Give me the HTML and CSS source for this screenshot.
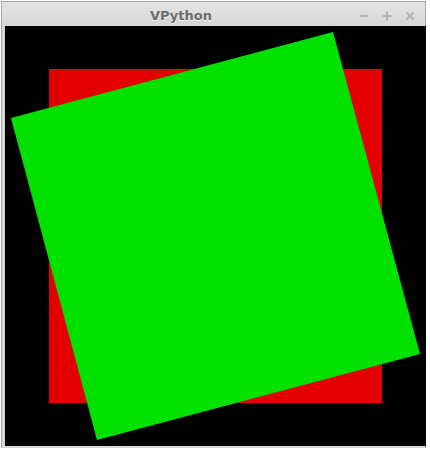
FILE: index.html
```html
<!DOCTYPE html>
<html>
<head>
<meta charset="utf-8">
<link rel="stylesheet" href="styles.css">
</head>
<body>
<div class="window">
  <div class="titlebar">
    <div class="title">VPython</div>
    <div class="controls">
      <svg class="ctl" width="12" height="12" viewBox="0 0 12 12"><rect x="1.5" y="5" width="9" height="2" fill="#b2b2b2"/></svg>
      <svg class="ctl" width="12" height="12" viewBox="0 0 12 12"><rect x="1.5" y="5" width="9" height="2" fill="#b2b2b2"/><rect x="5" y="1.5" width="2" height="9" fill="#b2b2b2"/></svg>
      <svg class="ctl" width="12" height="12" viewBox="0 0 12 12"><path d="M2.5 2.5 L9.5 9.5 M9.5 2.5 L2.5 9.5" stroke="#b2b2b2" stroke-width="2"/></svg>
    </div>
  </div>
  <div class="frame">
    <svg class="canvas" width="421" height="420" viewBox="0 0 421 420">
      <rect x="44" y="43" width="333" height="334" fill="#e40000"/>
      <polygon points="328,6 415,328 92,414 6,92" fill="#00e100"/>
    </svg>
  </div>
</div>
</body>
</html>
```
FILE: styles.css
```css
html, body {
  margin: 0;
  padding: 0;
  background: #ffffff;
}
.window {
  margin: 1px 2px 0 1px;
  width: 425px;
  height: 447px;
  border: 1px solid #a6a6a6;
  border-bottom: none;
  background: #d8d8d8;
  display: flex;
  flex-direction: column;
  box-sizing: border-box;
}
.titlebar {
  height: 24px;
  background: linear-gradient(#e4e4e4, #d6d6d6);
  display: flex;
  align-items: center;
}
.title {
  font-family: "DejaVu Sans", sans-serif;
  font-weight: bold;
  font-size: 13px;
  color: #6c6c6c;
  text-shadow: 0 1px 0 #f2f2f2;
  margin-left: 148px;
  padding-top: 2px;
}
.controls {
  margin-left: auto;
  margin-right: 9px;
  display: flex;
  gap: 11px;
  padding-top: 3px;
}
.ctl {
  display: block;
}
.frame {
  flex: 1;
  padding: 0 0 0 3px;
  background: #d6d6d6;
}
.canvas {
  display: block;
  background: #000000;
}
```
